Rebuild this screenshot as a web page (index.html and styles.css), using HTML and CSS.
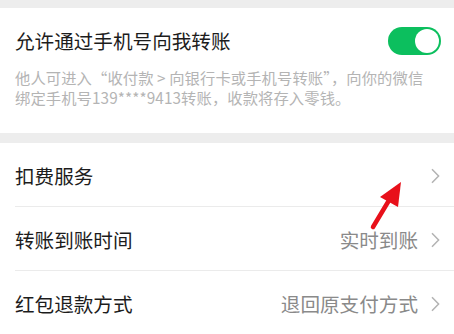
FILE: index.html
```html
<!DOCTYPE html>
<html lang="zh">
<head>
<meta charset="utf-8">
<link rel="stylesheet" href="styles.css">
</head>
<body>
<div class="page">
  <div class="band top"></div>
  <section class="switch-section">
    <div class="switch-row">
      <span class="title">允许通过手机号向我转账</span>
      <span class="toggle"><span class="knob"></span></span>
    </div>
    <p class="desc">他人可进入“收付款 &gt; 向银行卡或手机号转账”，向你的微信绑定手机号139****9413转账，收款将存入零钱。</p>
  </section>
  <div class="band gap"></div>
  <ul class="list">
    <li class="row"><span class="label">扣费服务</span><span class="right"><svg class="chev" viewBox="0 0 9 16"><path d="M1 1.2 L7.6 8 L1 14.8" /></svg></span></li>
    <li class="row"><span class="label">转账到账时间</span><span class="right"><span class="value">实时到账</span><svg class="chev" viewBox="0 0 9 16"><path d="M1 1.2 L7.6 8 L1 14.8" /></svg></span></li>
    <li class="row"><span class="label">红包退款方式</span><span class="right"><span class="value">退回原支付方式</span><svg class="chev" viewBox="0 0 9 16"><path d="M1 1.2 L7.6 8 L1 14.8" /></svg></span></li>
  </ul>
  <svg class="arrow" viewBox="0 0 454 334" width="454" height="334">
    <line x1="373" y1="227" x2="391" y2="197" stroke="#e8101a" stroke-width="4.5" stroke-linecap="round"/>
    <polygon points="401,182 380,197 398,207" fill="#e8101a"/>
  </svg>
</div>
</body>
</html>
```
FILE: styles.css
```css
html, body {
  margin: 0;
  padding: 0;
  background: #ffffff;
}
body {
  font-family: "Noto Sans CJK SC", "Noto Sans", sans-serif;
  width: 454px;
  height: 334px;
  overflow: hidden;
}
.page {
  position: relative;
  width: 454px;
  height: 334px;
}
.band {
  background: #ededed;
}
.band.top {
  height: 8px;
}
.band.gap {
  height: 10px;
}
.switch-section {
  padding: 19px 13px 26px 15px;
}
.switch-row {
  display: flex;
  align-items: center;
  justify-content: space-between;
  height: 28px;
}
.title {
  font-size: 19.6px;
  color: #1c1c1c;
  line-height: 28px;
}
.toggle {
  width: 53px;
  height: 28px;
  border-radius: 14px;
  background: #0cbf5e;
  display: flex;
  align-items: center;
  justify-content: flex-end;
  padding-right: 2px;
  box-sizing: border-box;
}
.knob {
  width: 24px;
  height: 24px;
  border-radius: 50%;
  background: #ffffff;
}
.desc {
  margin: 12px 6px 0 0;
  font-size: 15.3px;
  line-height: 20px;
  color: #b4b4b4;
  letter-spacing: 0.1px;
}
.list {
  list-style: none;
  margin: 0;
  padding: 0;
}
.row {
  display: flex;
  align-items: center;
  justify-content: space-between;
  height: 64px;
  margin-left: 15px;
  padding-right: 14px;
  border-bottom: 1px solid #ebebeb;
  padding-top: 2px;
  box-sizing: border-box;
}
.label {
  font-size: 19.6px;
  color: #1c1c1c;
}
.right {
  display: flex;
  align-items: center;
  gap: 13px;
}
.value {
  font-size: 19.6px;
  color: #8a8a8a;
}
.chev {
  width: 9px;
  height: 16px;
  fill: none;
  stroke: #b3b3b3;
  stroke-width: 1.5;
}
.arrow {
  position: absolute;
  left: 0;
  top: 0;
  pointer-events: none;
}
```
